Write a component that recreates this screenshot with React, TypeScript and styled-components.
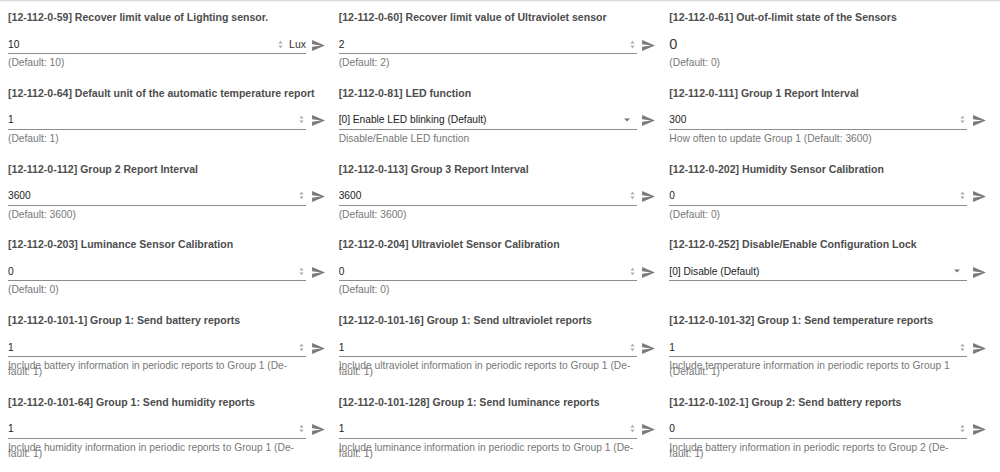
import React from "react";
import styled, { createGlobalStyle } from "styled-components";

const GlobalStyle = createGlobalStyle`
  html, body { margin: 0; padding: 0; background: #fff; }
  body { font-family: "Liberation Sans", Arial, Helvetica, sans-serif; }
  * { box-sizing: border-box; }
`;

type Field = {
  id: string;
  title: string;
  kind: "number" | "select" | "readonly";
  value: string;
  unit?: string;
  help?: string;
};

const fields: Field[] = [
  { id: "12-112-0-59", title: "Recover limit value of Lighting sensor.", kind: "number", value: "10", unit: "Lux", help: "(Default: 10)" },
  { id: "12-112-0-60", title: "Recover limit value of Ultraviolet sensor", kind: "number", value: "2", help: "(Default: 2)" },
  { id: "12-112-0-61", title: "Out-of-limit state of the Sensors", kind: "readonly", value: "0", help: "(Default: 0)" },
  { id: "12-112-0-64", title: "Default unit of the automatic temperature report", kind: "number", value: "1", help: "(Default: 1)" },
  { id: "12-112-0-81", title: "LED function", kind: "select", value: "[0] Enable LED blinking (Default)", help: "Disable/Enable LED function" },
  { id: "12-112-0-111", title: "Group 1 Report Interval", kind: "number", value: "300", help: "How often to update Group 1 (Default: 3600)" },
  { id: "12-112-0-112", title: "Group 2 Report Interval", kind: "number", value: "3600", help: "(Default: 3600)" },
  { id: "12-112-0-113", title: "Group 3 Report Interval", kind: "number", value: "3600", help: "(Default: 3600)" },
  { id: "12-112-0-202", title: "Humidity Sensor Calibration", kind: "number", value: "0", help: "(Default: 0)" },
  { id: "12-112-0-203", title: "Luminance Sensor Calibration", kind: "number", value: "0", help: "(Default: 0)" },
  { id: "12-112-0-204", title: "Ultraviolet Sensor Calibration", kind: "number", value: "0", help: "(Default: 0)" },
  { id: "12-112-0-252", title: "Disable/Enable Configuration Lock", kind: "select", value: "[0] Disable (Default)" },
  { id: "12-112-0-101-1", title: "Group 1: Send battery reports", kind: "number", value: "1", help: "Include battery information in periodic reports to Group 1 (De\u00ADfault: 1)" },
  { id: "12-112-0-101-16", title: "Group 1: Send ultraviolet reports", kind: "number", value: "1", help: "Include ultraviolet information in periodic reports to Group 1 (De\u00ADfault: 1)" },
  { id: "12-112-0-101-32", title: "Group 1: Send temperature reports", kind: "number", value: "1", help: "Include temperature information in periodic reports to Group 1 (De\u00ADfault: 1)" },
  { id: "12-112-0-101-64", title: "Group 1: Send humidity reports", kind: "number", value: "1", help: "Include humidity information in periodic reports to Group 1 (De\u00ADfault: 1)" },
  { id: "12-112-0-101-128", title: "Group 1: Send luminance reports", kind: "number", value: "1", help: "Include luminance information in periodic reports to Group 1 (De\u00ADfault: 1)" },
  { id: "12-112-0-102-1", title: "Group 2: Send battery reports", kind: "number", value: "0", help: "Include battery information in periodic reports to Group 2 (De\u00ADfault: 1)" },
];

const Page = styled.div`
  min-height: 472px;
  box-shadow: inset 0 2px 2px -1px rgba(0, 0, 0, 0.2);
`;

const Grid = styled.div`
  display: grid;
  grid-template-columns: repeat(3, minmax(0, 1fr));
  column-gap: 8px;
  row-gap: 20.75px;
  padding: 11px 8px 0 8px;
  align-items: start;
`;

const FieldBox = styled.div`
  display: flex;
  flex-direction: column;
`;

const Title = styled.div`
  font-size: 10.55px;
  line-height: 13px;
  font-weight: bold;
  color: #4d4d4d;
  white-space: nowrap;
  margin-bottom: 12px;
`;

const Row = styled.div`
  display: flex;
  align-items: stretch;
`;

const InputWrap = styled.div<{ $underline: boolean }>`
  flex: 0 0 298px;
  height: 18px;
  display: flex;
  align-items: center;
  border-bottom: 1px solid ${(p) => (p.$underline ? "#8c8c8c" : "transparent")};
  padding-bottom: 1px;
`;

const ValueInput = styled.input`
  flex: 1;
  min-width: 0;
  border: none;
  outline: none;
  background: transparent;
  padding: 0;
  margin: 0;
  font-family: inherit;
  font-size: 10.2px;
  color: #222;
`;

const SelectText = styled.span`
  flex: 1;
  font-size: 10.2px;
  color: #222;
  white-space: nowrap;
`;

const ReadValue = styled.span`
  font-size: 14.5px;
  color: #3a3a3a;
`;

const Unit = styled.span`
  font-size: 10.5px;
  color: #333;
  margin-left: 4px;
`;

const Spinner = styled.svg`
  width: 5px;
  height: 9px;
  flex: 0 0 auto;
  margin-right: 2px;
`;

const Caret = styled.svg`
  width: 6px;
  height: 4px;
  flex: 0 0 auto;
  margin-right: 7px;
`;

const SendButton = styled.button`
  flex: 0 0 24px;
  height: 18px;
  border: none;
  background: transparent;
  padding: 0;
  display: flex;
  align-items: center;
  justify-content: center;
  cursor: pointer;
`;

const Help = styled.div`
  margin-top: 6px;
  width: 295px;
  font-size: 10.25px;
  line-height: 6px;
  color: #777;
  min-height: 6px;
`;

const SpinnerIcon = () => (
  <Spinner viewBox="0 0 5 9">
    <path d="M0.5 3.5 L2.5 0.8 L4.5 3.5 Z" fill="#aaa" />
    <path d="M0.5 5.5 L4.5 5.5 L2.5 8.2 Z" fill="#aaa" />
  </Spinner>
);

const CaretIcon = () => (
  <Caret viewBox="0 0 6 4">
    <path d="M0 0.5 L6 0.5 L3 3.5 Z" fill="#777" />
  </Caret>
);

const SendIcon = () => (
  <svg width="13" height="11" viewBox="2 3 21 18">
    <path d="M2.01 21L23 12 2.01 3 2 10l15 2-15 2z" fill="#7a7a7a" />
  </svg>
);

const FieldItem = ({ f }: { f: Field }) => (
  <FieldBox>
    <Title>[{f.id}] {f.title}</Title>
    <Row>
      <InputWrap $underline={f.kind !== "readonly"}>
        {f.kind === "number" && (
          <>
            <ValueInput readOnly defaultValue={f.value} />
            <SpinnerIcon />
            {f.unit && <Unit>{f.unit}</Unit>}
          </>
        )}
        {f.kind === "select" && (
          <>
            <SelectText>{f.value}</SelectText>
            <CaretIcon />
          </>
        )}
        {f.kind === "readonly" && <ReadValue>{f.value}</ReadValue>}
      </InputWrap>
      {f.kind !== "readonly" && (
        <SendButton aria-label="send">
          <SendIcon />
        </SendButton>
      )}
    </Row>
    <Help>{f.help}</Help>
  </FieldBox>
);

export default function App() {
  return (
    <>
      <GlobalStyle />
      <Page>
        <Grid>
          {fields.map((f) => (
            <FieldItem key={f.id} f={f} />
          ))}
        </Grid>
      </Page>
    </>
  );
}
